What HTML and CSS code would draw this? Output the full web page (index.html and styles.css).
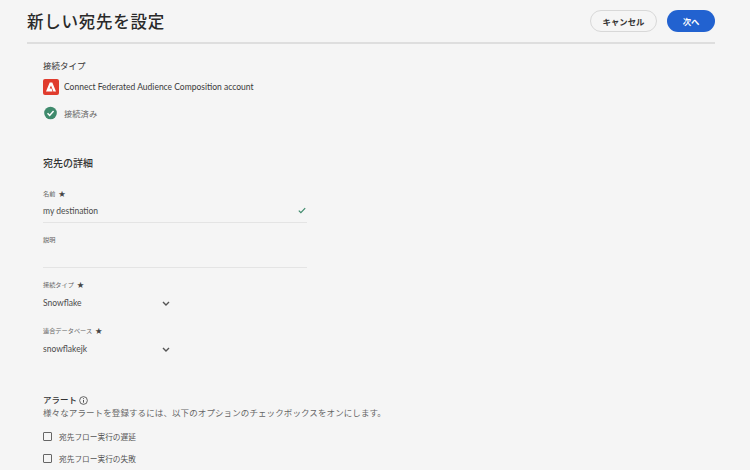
FILE: index.html
```html
<!DOCTYPE html>
<html>
<head>
    <title>新しい宛先を設定</title>
    <link rel="stylesheet" href="styles.css">
</head>
<body>
    <header class="top-bar">
        <h1 class="page-title">新しい宛先を設定</h1>
        <div class="actions">
            <button class="btn btn-cancel">キャンセル</button>
            <button class="btn btn-next">次へ</button>
        </div>
    </header>
    <main class="content">
        <section class="connection">
            <div class="label-strong">接続タイプ</div>
            <div class="account-row">
                <svg class="adobe-icon" viewBox="0 0 16 16">
                    <rect width="16" height="16" rx="2" fill="#e03c2e"/>
                    <path d="M6.7 3.6h2.6L13 12.4h-2.6L8 6.4 6.6 9.6h2l.9 2.8H3z" fill="#fff"/>
                </svg>
                <span>Connect Federated Audience Composition account</span>
            </div>
            <div class="status-row">
                <svg class="status-icon" viewBox="0 0 14 14">
                    <circle cx="7" cy="7" r="6.8" fill="#3f8a6c"/>
                    <path d="M3.8 7.2l2.3 2.4 4.2-4.8" fill="none" stroke="#fff" stroke-width="1.6"/>
                </svg>
                <span>接続済み</span>
            </div>
        </section>

        <section class="details">
            <h2 class="section-title">宛先の詳細</h2>
            <div class="field field-name">
                <div class="field-label">名前<span class="star">★</span></div>
                <div class="text-input">
                    <span>my destination</span>
                    <svg class="valid-icon" viewBox="0 0 10 8">
                        <path d="M1 4.2l2.6 2.6L9 1" fill="none" stroke="#3f8a6c" stroke-width="1.5"/>
                    </svg>
                </div>
            </div>
            <div class="field field-desc">
                <div class="field-label">説明</div>
                <div class="text-input"></div>
            </div>
            <div class="field field-select">
                <div class="field-label">接続タイプ<span class="star">★</span></div>
                <div class="select-input">
                    <span>Snowflake</span>
                    <svg class="chevron" viewBox="0 0 8 5">
                        <path d="M1 1l3 3 3-3" fill="none" stroke="#555" stroke-width="1.4"/>
                    </svg>
                </div>
            </div>
            <div class="field field-select">
                <div class="field-label">連合データベース<span class="star">★</span></div>
                <div class="select-input">
                    <span>snowflakejk</span>
                    <svg class="chevron" viewBox="0 0 8 5">
                        <path d="M1 1l3 3 3-3" fill="none" stroke="#555" stroke-width="1.4"/>
                    </svg>
                </div>
            </div>
        </section>

        <section class="alerts">
            <div class="alerts-title">
                アラート
                <svg class="info-icon" viewBox="0 0 10 10">
                    <circle cx="5" cy="5" r="4.3" fill="none" stroke="#444" stroke-width="0.9"/>
                    <path d="M5 4.4v3M5 2.4v1" fill="none" stroke="#444" stroke-width="1"/>
                </svg>
            </div>
            <p class="alerts-desc">様々なアラートを登録するには、以下のオプションのチェックボックスをオンにします。</p>
            <label class="check-row"><span class="checkbox"></span>宛先フロー実行の遅延</label>
            <label class="check-row"><span class="checkbox"></span>宛先フロー実行の失敗</label>
        </section>
    </main>
</body>
</html>
```

FILE: styles.css
```css
* {
    margin: 0;
    padding: 0;
    box-sizing: border-box;
}

html, body {
    height: 470px;
    overflow: hidden;
}

body {
    background: #f5f5f5;
    color: #4b4b4b;
    font-family: Lato, "Noto Sans CJK JP", sans-serif;
}

.top-bar {
    height: 44px;
    margin: 0 35px 0 27px;
    border-bottom: 2px solid #dedede;
    display: flex;
    justify-content: space-between;
    align-items: center;
}

.page-title {
    font-size: 16.5px;
    font-weight: 500;
    letter-spacing: 0.75px;
    color: #2a2a2a;
}

.actions {
    display: flex;
    gap: 10px;
}

.btn {
    height: 22px;
    border-radius: 11px;
    font-family: inherit;
    font-size: 8.4px;
    font-weight: 700;
}

.btn-cancel {
    width: 67px;
    background: #f5f5f5;
    border: 1.5px solid #d8d8d8;
    color: #333;
}

.btn-next {
    width: 48px;
    background: #2262d0;
    border: none;
    color: #fff;
}

.content {
    padding: 16px 0 0 43px;
}

.label-strong {
    font-size: 8.5px;
    line-height: 12px;
    color: #333;
}

.account-row {
    display: flex;
    align-items: center;
    gap: 5px;
    margin-top: 7px;
    font-size: 8.5px;
    color: #3a3a3a;
}

.adobe-icon {
    width: 16px;
    height: 16px;
}

.status-row {
    display: flex;
    align-items: center;
    gap: 7px;
    margin: 11px 0 0 1px;
    font-size: 8.3px;
    color: #666;
}

.status-icon {
    width: 13px;
    height: 14px;
}

.section-title {
    margin-top: 36px;
    font-size: 10px;
    line-height: 14px;
    font-weight: 500;
    color: #333;
}

.field {
    width: 264px;
}

.field-name {
    margin-top: 18px;
}

.field-desc {
    margin: 12px 0 11px;
}

.field-desc .text-input {
    height: 23px;
}

.field-select + .field-select {
    margin-top: 9px;
}

.field-label {
    font-size: 6.2px;
    line-height: 10px;
    color: #666;
}

.star {
    margin-left: 3px;
    font-size: 7px;
    color: #444;
}

.text-input {
    height: 24px;
    border-bottom: 1px solid #e4e4e4;
    display: flex;
    align-items: center;
    justify-content: space-between;
    padding-right: 1px;
    font-size: 8.5px;
}

.select-input {
    width: 127px;
    height: 26px;
    display: flex;
    align-items: center;
    justify-content: space-between;
    font-size: 8.5px;
}

.valid-icon {
    width: 8px;
    height: 7px;
}

.chevron {
    width: 8px;
    height: 5px;
}

.alerts {
    margin-top: 32px;
}

.alerts-title {
    display: flex;
    align-items: center;
    gap: 2px;
    font-size: 8.5px;
    line-height: 12px;
    font-weight: 500;
    color: #333;
}

.info-icon {
    width: 9px;
    height: 9px;
}

.alerts-desc {
    font-size: 8.5px;
    line-height: 15px;
    letter-spacing: 0.1px;
    color: #666;
}

.check-row {
    display: flex;
    align-items: center;
    gap: 7px;
    height: 10px;
    margin-top: 12px;
    font-size: 7.7px;
    color: #555;
}

.alerts-desc + .check-row {
    margin-top: 10px;
}

.checkbox {
    width: 9px;
    height: 9px;
    border: 1.2px solid #666;
    border-radius: 1px;
}
```
